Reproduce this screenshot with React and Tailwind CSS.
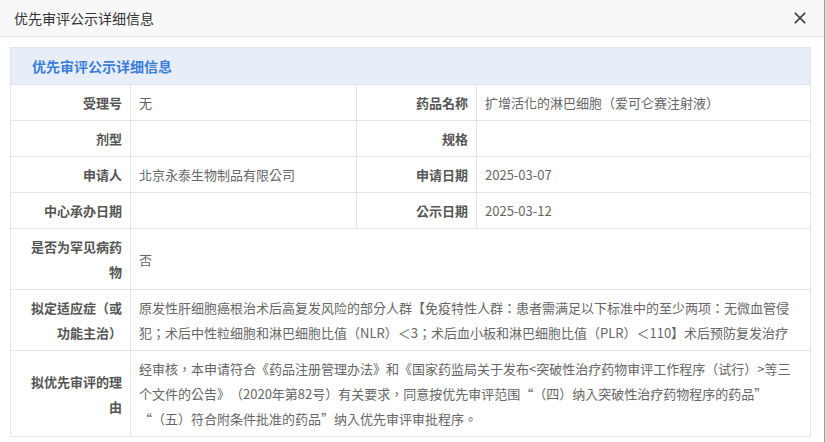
import React from "react";

const L = "border border-[#e4e4e4] px-2 py-[5px] text-right align-middle font-bold text-[#555] leading-[25px]";
const V = "border border-[#e4e4e4] px-2 py-[5px] text-left align-middle text-[#666] leading-[25px]";

export default function App() {
  return (
    <div lang="zh-TW" className="w-[826px] h-[442px] overflow-hidden flex bg-white font-['Noto_Sans_CJK_TC','Microsoft_YaHei',sans-serif] text-[13px] [text-spacing-trim:space-all]">
      <div className="w-[824px] flex flex-col">
        <div lang="zh-CN" className="h-[37px] shrink-0 bg-[#f8f8f8] border-b border-[#e8e8e8] flex items-center justify-between pl-[14px] pr-[18px]">
          <span className="text-[14px] text-[#333] font-['Noto_Sans_CJK_SC',sans-serif]">优先审评公示详细信息</span>
          <svg width="12" height="12" viewBox="0 0 12 12" className="block">
            <path d="M0.8 0.8 L11.2 11.2 M11.2 0.8 L0.8 11.2" stroke="#333" strokeWidth="1.6" />
          </svg>
        </div>
        <div className="pt-[10px] pl-[10px]">
          <table className="w-[800px] table-fixed border-collapse">
            <colgroup>
              <col className="w-[120px]" />
              <col className="w-[226px]" />
              <col className="w-[120px]" />
              <col className="w-[334px]" />
            </colgroup>
            <thead>
              <tr>
                <th lang="zh-CN" colSpan={4} className="border border-[#dfe5f0] bg-[#e8eef9] text-left pl-[21px] py-[5px] leading-[26px] text-[14px] font-bold text-[#3a7ddb] font-['Noto_Sans_CJK_SC',sans-serif]">
                  优先审评公示详细信息
                </th>
              </tr>
            </thead>
            <tbody>
              <tr>
                <td className={L}>受理号</td>
                <td className={V}>无</td>
                <td className={L}>药品名称</td>
                <td className={V}>扩增活化的淋巴细胞（爱可仑赛注射液）</td>
              </tr>
              <tr>
                <td className={L}>剂型</td>
                <td className={V}></td>
                <td className={L}>规格</td>
                <td className={V}></td>
              </tr>
              <tr>
                <td className={L}>申请人</td>
                <td className={V}>北京永泰生物制品有限公司</td>
                <td className={L}>申请日期</td>
                <td className={V}>2025-03-07</td>
              </tr>
              <tr>
                <td className={L}>中心承办日期</td>
                <td className={V}></td>
                <td className={L}>公示日期</td>
                <td className={V}>2025-03-12</td>
              </tr>
              <tr>
                <td className={L}>是否为罕见病药<br />物</td>
                <td className={V} colSpan={3}>否</td>
              </tr>
              <tr>
                <td className={L}>拟定适应症（或<br />功能主治）</td>
                <td className={V + " whitespace-nowrap"} colSpan={3}>
                  原发性肝细胞癌根治术后高复发风险的部分人群【免疫特性人群：患者需满足以下标准中的至少两项：无微血管侵<br />
                  犯；术后中性粒细胞和淋巴细胞比值（NLR）＜3；术后血小板和淋巴细胞比值（PLR）＜110】术后预防复发治疗
                </td>
              </tr>
              <tr>
                <td className={L}>拟优先审评的理<br />由</td>
                <td className={V + " whitespace-nowrap"} colSpan={3}>
                  经审核，本申请符合《药品注册管理办法》和《国家药监局关于发布&lt;突破性治疗药物审评工作程序（试行）&gt;等三<br />
                  个文件的公告》（2020年第82号）有关要求，同意按优先审评范围“（四）纳入突破性治疗药物程序的药品”<br />
                  “（五）符合附条件批准的药品”纳入优先审评审批程序。
                </td>
              </tr>
            </tbody>
          </table>
        </div>
      </div>
      <div className="w-[2px] h-full border-l border-[#9a9a9a] bg-[#d6dde6]" />
    </div>
  );
}
